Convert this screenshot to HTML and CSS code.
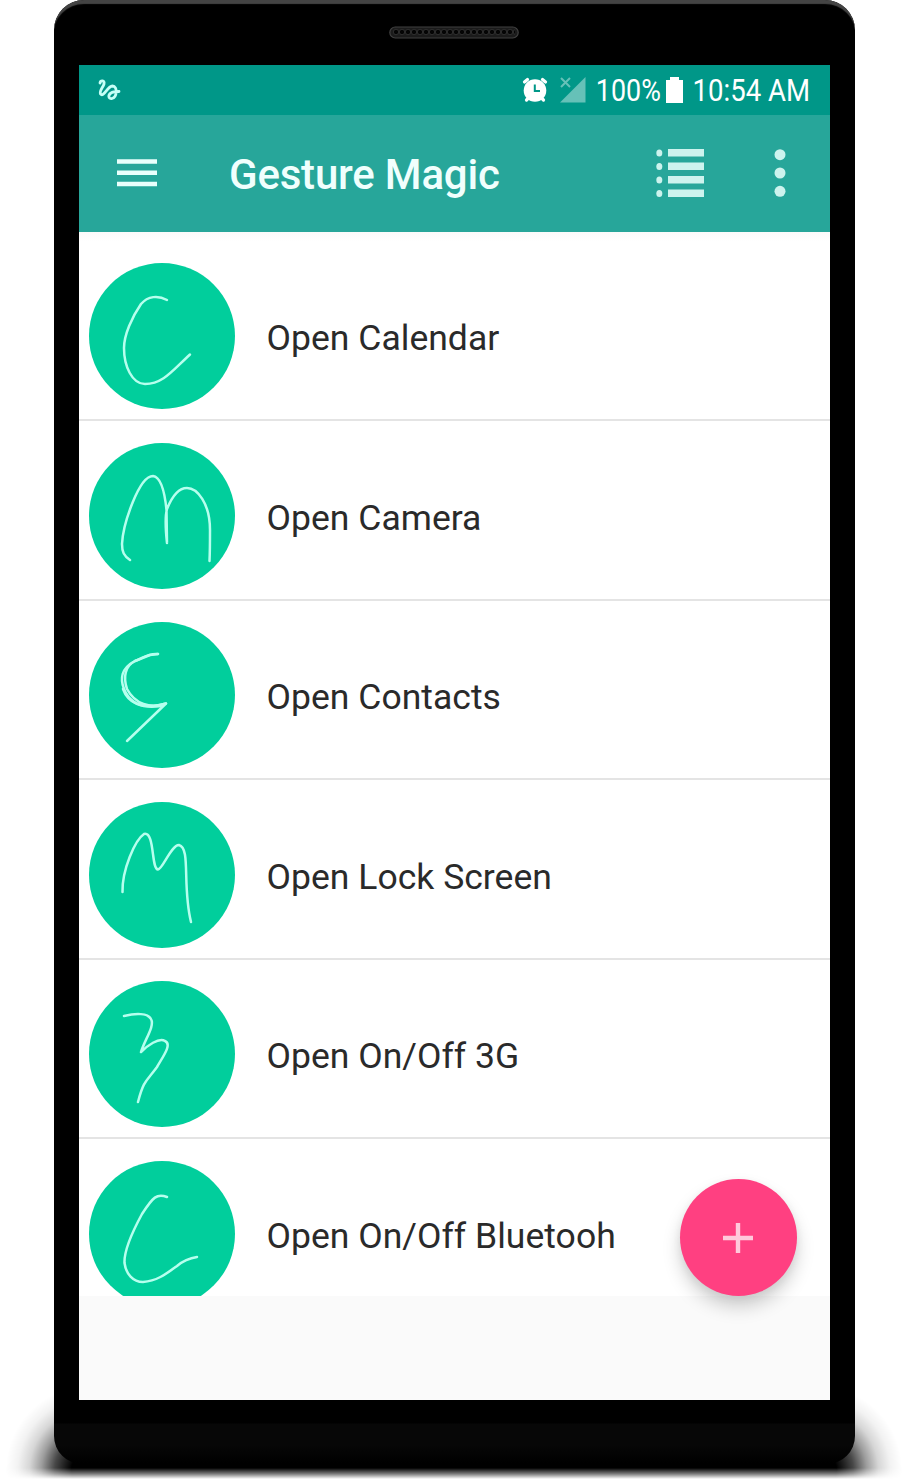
FILE: index.html
```html
<!DOCTYPE html>
<html lang="en">
<head>
<meta charset="utf-8">
<title>Gesture Magic</title>
<link rel="stylesheet" href="styles.css">
</head>
<body>
<div class="stage">
  <div class="shadow"></div>
  <div class="phone">
    <div class="top-bezel">
      <svg class="speaker" width="130" height="13" viewBox="0 0 130 13">
        <defs><pattern id="mesh" width="6" height="9" patternUnits="userSpaceOnUse" x="4" y="2"><circle cx="3" cy="4" r="2.7" fill="#050505" stroke="#343434" stroke-width=".8"/></pattern></defs>
        <rect x=".8" y="1" width="128.4" height="11" rx="5.5" fill="#1b1b1b" stroke="#414141" stroke-width="1.2"/>
        <rect x="4" y="2" width="122" height="9" fill="url(#mesh)"/>
      </svg>
    </div>
    <div class="screen">
      <div class="status">
        <svg class="scribble" width="24" height="24" viewBox="0 0 24 24"><path d="M3 5C3.500 2 8 2 7 6C6 9.500 2 13 3.500 16C6.500 20 10 8.500 15.500 8C21 8 20 19.500 15 20.500C11 21 11 17 14 15C16 13.500 19 13.500 22 13.500"/></svg>
        <div class="status-right">
          <svg class="alarm" width="26" height="26" viewBox="0 0 26 26"><path d="M2.500 5L5.500 2.500M23.500 5L20.500 2.500M4.500 23L7 20.500M21.500 23L19 20.500" stroke="#fff" stroke-width="3.200" stroke-linecap="round"/><circle cx="13" cy="13.500" r="11.300" fill="#fff"/><path d="M12.800 7.500v6.500H18" fill="none" stroke="#009788" stroke-width="2"/></svg>
          <svg class="signal" width="26" height="26" viewBox="0 0 26 26"><path d="M25.500 0V25.500H0Z" fill="#66c1b8"/><path d="M1 1L10 10M10 1L1 10" stroke="#66c1b8" stroke-width="2"/></svg>
          <svg class="pct" width="69" height="44" viewBox="-2 -5 69 44"><text x="-.2" y="27.200" textLength="65" lengthAdjust="spacingAndGlyphs">100%</text></svg>
          <svg class="battery" width="17" height="26" viewBox="0 0 17 26"><path d="M4 0H13V3H17V26H0V3H4Z" fill="#fff"/></svg>
          <svg class="clock" width="122" height="44" viewBox="-2 -5 122 44"><text x="-.5" y="27.200" textLength="117.500" lengthAdjust="spacingAndGlyphs">10:54 AM</text></svg>
        </div>
      </div>
      <div class="appbar">
        <svg class="menu" width="40" height="28" viewBox="0 0 40 28"><path d="M0 2.500H40M0 13.700H40M0 25H40" stroke="#e9fffc" stroke-width="4.600"/></svg>
        <h1 class="title">Gesture Magic</h1>
        <svg class="listicon" width="48" height="50" viewBox="0 0 48 50" fill="#cdf3ee"><path d="M12 1H48V8.500H12ZM12 14.500H48V22H12ZM12 28H48V35.500H12ZM12 41.500H48V49H12Z"/><ellipse cx="3.300" cy="5" rx="3" ry="3.600"/><ellipse cx="3.300" cy="18.500" rx="3" ry="3.600"/><ellipse cx="3.300" cy="32" rx="3" ry="3.600"/><ellipse cx="3.300" cy="45.500" rx="3" ry="3.600"/></svg>
        <svg class="more" width="12" height="48" viewBox="0 0 12 48" fill="#cdf3ee"><circle cx="6" cy="5.700" r="5.500"/><circle cx="6" cy="24" r="5.500"/><circle cx="6" cy="42.300" r="5.500"/></svg>
      </div>
      <div class="list">
        <div class="row"><svg class="gesture" viewBox="0 0 146 146"><circle cx="73" cy="73" r="73"/><path d="M78 37C69 32 59 33 52 41C43 54 35 72 35 85C35 103 43 121 56 121C74 121 83 108 101 91.500"/></svg><span class="label">Open Calendar</span></div>
        <div class="row"><svg class="gesture" viewBox="0 0 146 146"><circle cx="73" cy="73" r="73"/><path d="M41 117C35 113 33 109 33 101C34 81 50 33 64 33C73 34 76 52 77.500 67L78 100C76.500 86 76 73 78 66C84 51 91 45 98 45C108 45 121 60 121 87C121 99 121 108 120.500 118"/></svg><span class="label">Open Camera</span></div>
        <div class="row"><svg class="gesture" viewBox="0 0 146 146"><circle cx="73" cy="73" r="73"/><path d="M69 32C58 31 55 36 46 39C32 46 31 57 35 67C41 82 54 88 77 81.500L38 119"/><path d="M69 32L61 33L46 39C36 44 34 55 38 67C46 82 61 87 77 81.500L72 84C53 87 39 81 34 67"/></svg><span class="label">Open Contacts</span></div>
        <div class="row"><svg class="gesture" viewBox="0 0 146 146"><circle cx="73" cy="73" r="73"/><path d="M33.500 90C33 68 46 38 55 32C66 29 62 67 69 67.500C74 67 82 43 90 43C102 46 93 84 102 120"/></svg><span class="label">Open Lock Screen</span></div>
        <div class="row"><svg class="gesture" viewBox="0 0 146 146"><circle cx="73" cy="73" r="73"/><path d="M35 35C47 32 59 32 62 38C66 45 56 58 52 71C58 65 70 56 76 60C83 63 75 74 68 86C58 100 55 98 49 121"/></svg><span class="label">Open On/Off 3G</span></div>
        <div class="row"><svg class="gesture" viewBox="0 0 146 146"><circle cx="73" cy="73" r="73"/><path d="M78 36C68 32 64 36 53 53C40 77 35 91 35.500 102C37 113 44 121 54 121C68 120 77 113 88 105C95 99 101 97 108 96"/></svg><span class="label">Open On/Off Bluetooh</span></div>
      </div>
      <div class="fab"><svg width="30" height="30" viewBox="0 0 30 30"><path d="M15 0V30M0 15H30" stroke="#ffc9db" stroke-width="4.400"/></svg></div>
    </div>
  </div>
</div>
</body>
</html>
```
FILE: styles.css
```css
* { box-sizing: border-box; }
body { margin: 0; background: #fff; font-family: Roboto, "Liberation Sans", sans-serif; }
svg { display: block; flex: none; }
.stage { position: relative; width: 908px; height: 1482px; overflow: hidden; padding-left: 53.5px; }
.phone {
  position: relative; width: 801.5px; height: 1464px; padding: 0 25px;
  border-radius: 30px 30px 28px 28px;
  background: linear-gradient(#000 0 1423px, #070707 1424px 1445px, #000 1463px);
  box-shadow: inset 0 5px 1px -1px #444;
}
.top-bezel { height: 65px; padding-top: 26px; display: flex; justify-content: center; }
.screen { position: relative; height: 1335px; background: #fafafa; }
.status { height: 49.5px; background: #009788; display: flex; justify-content: space-between; padding: 0 17px 0 18px; }
.scribble { margin-top: 13px; }
.scribble path { fill: none; stroke: #c6fff7; stroke-width: 2.800; stroke-linecap: round; }
.status-right { display: flex; align-items: flex-start; padding-top: 12px; }
.status-right text { font: 32px Roboto, "Liberation Sans", sans-serif; fill: #fff; }
.signal { margin: 0 8.500px 0 12px; }
.pct, .clock { margin-top: -8px; overflow: visible; }
.battery { margin: 0 8px 0 3px; }
.appbar { height: 117px; background: #27a69a; display: flex; align-items: center; padding: 0 44px 0 38.500px; }
.menu { margin-right: 72px; }
.title { margin: 3px 0 0; color: #f0fffd; font-size: 42px; line-height: 50px; font-weight: 500; letter-spacing: -.2px; flex: 1; white-space: nowrap; }
.listicon { margin-right: 70px; }
.list { height: 1064.500px; overflow: hidden; padding-top: 10px; background: linear-gradient(#fafafa, #fff 10px); }
.row { height: 179.5px; padding: 21.500px 0 0 10.500px; display: flex; border-bottom: 2px solid #e4e4e4; }
.gesture { width: 146px; height: 146px; }
.gesture circle { fill: #01ce9c; }
.gesture path { fill: none; stroke: #b6ffee; stroke-width: 2.500; stroke-linecap: round; stroke-linejoin: round; }
.label { margin-left: 31.500px; padding-top: 53px; font-size: 35.500px; line-height: 44px; letter-spacing: .03px; color: #2a2a2a; white-space: nowrap; }
.fab {
  position: absolute; right: 33.500px; bottom: 104px; width: 117px; height: 117px; border-radius: 50%;
  background: #ff4081; display: flex; align-items: center; justify-content: center;
  box-shadow: 0 11px 18px rgba(0,0,0,.18), 0 3px 8px rgba(0,0,0,.06);
}
.shadow {
  position: absolute; left: 0; right: 0; top: 1380px; height: 100px;
  background:
    radial-gradient(ellipse 84px 84px at 90px 90px, #000 22%, rgba(0,0,0,.72) 42%, rgba(0,0,0,.38) 58%, rgba(0,0,0,.16) 72%, rgba(0,0,0,.05) 86%, transparent 100%) 0 0 / 90px 100px no-repeat,
    radial-gradient(ellipse 84px 84px at 0 90px, #000 22%, rgba(0,0,0,.72) 42%, rgba(0,0,0,.38) 58%, rgba(0,0,0,.16) 72%, rgba(0,0,0,.05) 86%, transparent 100%) 100% 0 / 90px 100px no-repeat,
    linear-gradient(#000, #000) 90px 0 / 728px 100px no-repeat;
  -webkit-mask-image: linear-gradient(#000 88px, rgba(0,0,0,.5) 94px, transparent 99px);
  mask-image: linear-gradient(#000 88px, rgba(0,0,0,.5) 94px, transparent 99px);
}
```
